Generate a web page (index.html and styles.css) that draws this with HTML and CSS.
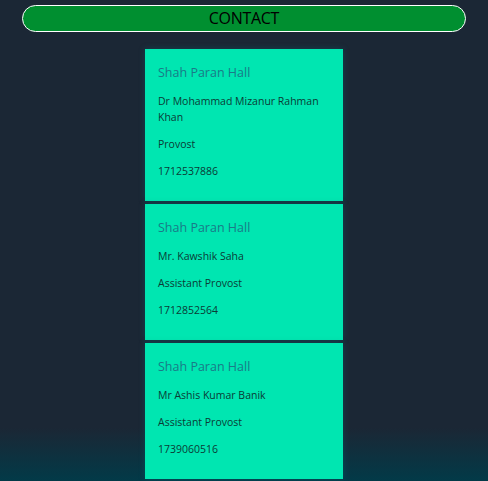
FILE: index.html
```html
<!DOCTYPE html>
<html>
<head>
<meta charset="utf-8">
<link rel="stylesheet" href="styles.css">
</head>
<body>
<div class="page">
  <h1 class="header">CONTACT</h1>
  <div class="list">
    <div class="card">
      <h2 class="hall">Shah Paran Hall</h2>
      <p>Dr Mohammad Mizanur Rahman Khan</p>
      <p>Provost</p>
      <p>1712537886</p>
    </div>
    <div class="card">
      <h2 class="hall">Shah Paran Hall</h2>
      <p>Mr. Kawshik Saha</p>
      <p>Assistant Provost</p>
      <p>1712852564</p>
    </div>
    <div class="card">
      <h2 class="hall">Shah Paran Hall</h2>
      <p>Mr Ashis Kumar Banik</p>
      <p>Assistant Provost</p>
      <p>1739060516</p>
    </div>
  </div>
</div>
</body>
</html>
```
FILE: styles.css
```css
html, body {
  margin: 0;
  padding: 0;
  height: 100%;
}
body {
  background: linear-gradient(to bottom, #1b2735 0px, #1b2735 428px, #023a48 481px);
  font-family: "Open Sans", "Noto Sans", sans-serif;
  overflow: hidden;
}
.page {
  padding: 5px 22px 0 22px;
}
.header {
  margin: 0;
  height: 25px;
  border: 1px solid #ffffff;
  border-radius: 14px;
  background: #008f30;
  color: #000;
  font-weight: 400;
  font-size: 16px;
  line-height: 25px;
  text-align: center;
  letter-spacing: -0.3px;
}
.list {
  display: flex;
  flex-direction: column;
  align-items: center;
  gap: 3px;
  margin-top: 17px;
}
.card {
  width: 172px;
  background: #00e6b1;
  padding: 15px 13px 11px 13px;
  box-shadow: 0 0 6px rgba(0, 120, 130, 0.35);
}
.hall {
  margin: 0 0 11px 0;
  font-size: 12.5px;
  font-weight: 400;
  line-height: 18px;
  color: #1a7a88;
}
.card p {
  margin: 0 0 11px 0;
  font-size: 10.5px;
  line-height: 16px;
  color: #0b3b35;
}
```
